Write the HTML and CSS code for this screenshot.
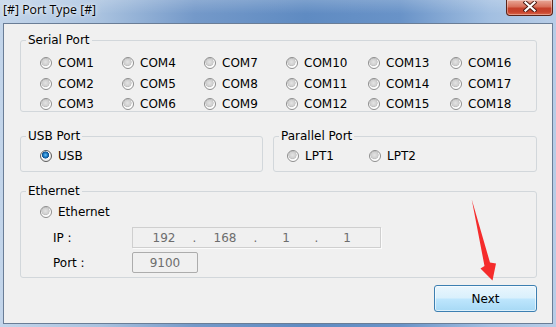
FILE: index.html
```html
<!DOCTYPE html>
<html>
<head>
<meta charset="utf-8">
<link rel="stylesheet" href="styles.css">
</head>
<body>
<div class="window">
  <div class="titlebar">
    <span class="title">[#] Port Type [#]</span>
    <span class="close"><svg width="14" height="11" viewBox="0 0 14 11"><path d="M2.5 1.5 L11.5 9.5 M11.5 1.5 L2.5 9.5" stroke="#4a1a12" stroke-width="4" stroke-linecap="square"/><path d="M2.5 1.5 L11.5 9.5 M11.5 1.5 L2.5 9.5" stroke="#fff" stroke-width="2.2" stroke-linecap="square"/></svg></span>
  </div>
  <div class="client">
    <fieldset class="group serial">
      <legend>Serial Port</legend>
      <div class="grid">
        <label class="opt"><span class="radio"></span>COM1</label>
        <label class="opt"><span class="radio"></span>COM4</label>
        <label class="opt"><span class="radio"></span>COM7</label>
        <label class="opt"><span class="radio"></span>COM10</label>
        <label class="opt"><span class="radio"></span>COM13</label>
        <label class="opt"><span class="radio"></span>COM16</label>
        <label class="opt"><span class="radio"></span>COM2</label>
        <label class="opt"><span class="radio"></span>COM5</label>
        <label class="opt"><span class="radio"></span>COM8</label>
        <label class="opt"><span class="radio"></span>COM11</label>
        <label class="opt"><span class="radio"></span>COM14</label>
        <label class="opt"><span class="radio"></span>COM17</label>
        <label class="opt"><span class="radio"></span>COM3</label>
        <label class="opt"><span class="radio"></span>COM6</label>
        <label class="opt"><span class="radio"></span>COM9</label>
        <label class="opt"><span class="radio"></span>COM12</label>
        <label class="opt"><span class="radio"></span>COM15</label>
        <label class="opt"><span class="radio"></span>COM18</label>
      </div>
    </fieldset>
    <div class="midrow">
      <fieldset class="group usb">
        <legend>USB Port</legend>
        <div class="grid one">
          <label class="opt"><span class="radio checked"></span>USB</label>
        </div>
      </fieldset>
      <fieldset class="group parallel">
        <legend>Parallel Port</legend>
        <div class="grid two">
          <label class="opt"><span class="radio"></span>LPT1</label>
          <label class="opt"><span class="radio"></span>LPT2</label>
        </div>
      </fieldset>
    </div>
    <fieldset class="group ethernet">
      <legend>Ethernet</legend>
      <label class="opt eth"><span class="radio"></span>Ethernet</label>
      <div class="fields">
        <span class="lbl">IP :</span>
        <div class="box ip">
          <span class="seg">192</span><span class="dot">.</span>
          <span class="seg">168</span><span class="dot">.</span>
          <span class="seg">1</span><span class="dot">.</span>
          <span class="seg">1</span>
        </div>
        <span class="lbl">Port :</span>
        <div class="box port">9100</div>
      </div>
    </fieldset>
    <div class="buttons">
      <button class="btn">Next</button>
    </div>
  </div>
  <svg class="arrow" width="556" height="327" viewBox="0 0 556 327">
    <polygon points="471.7,199.3 490,262.5 496,263.5 492.5,280.5 480.5,268.5 484.5,266" fill="#f52c2c"/>
  </svg>
</div>
</body>
</html>
```

FILE: styles.css
```css
html, body {
  margin: 0;
  padding: 0;
}
body {
  width: 556px;
  height: 327px;
  overflow: hidden;
  font-family: "DejaVu Sans", Verdana, sans-serif;
  font-size: 12px;
  color: #000;
}
.window {
  position: relative;
  width: 556px;
  height: 327px;
  display: flex;
  flex-direction: column;
  background: linear-gradient(to right, #c3d5ea 0%, #a9c2df 18%, #7499c9 35%, #5f8bc2 55%, #6993c8 72%, #a2bfe1 88%, #b8cde7 100%);
}
.titlebar {
  height: 23px;
  flex: none;
  display: flex;
  align-items: flex-start;
  justify-content: space-between;
  background: linear-gradient(to bottom, rgba(255,255,255,0.18), rgba(255,255,255,0) 60%);
}
.title {
  font-family: "Open Sans", "DejaVu Sans", sans-serif;
  font-size: 12.3px;
  line-height: 20px;
  padding-left: 3px;
  color: #000;
  text-shadow: 0 0 6px rgba(255,255,255,0.9), 0 0 3px rgba(255,255,255,0.8);
}
.close {
  width: 45px;
  height: 14px;
  margin-right: 3px;
  border: 1px solid #5a2418;
  border-top: none;
  border-radius: 0 0 4px 4px;
  background: linear-gradient(to bottom, #e9a898 0%, #d8705a 45%, #c5402a 55%, #c8442d 80%, #dc6a4c 100%);
  box-shadow: inset 0 0 0 1px rgba(255,255,255,0.35);
  display: flex;
  align-items: flex-start;
  justify-content: center;
  padding-top: 1px;
}
.client {
  flex: 1;
  margin: 0 3px 3px 3px;
  border: 1px solid #6a7d96;
  background: #f0f0f0;
  padding: 9px 15px 0 16px;
  display: flex;
  flex-direction: column;
}
.group {
  margin: 0;
  padding: 0;
  min-width: 0;
  border: 1px solid #d2d7db;
  border-radius: 3px;
}
.group legend {
  margin-left: 5px;
  padding: 0 2px;
  line-height: 14px;
  height: 14px;
}
.grid {
  display: grid;
  grid-template-columns: repeat(6, 82px);
  grid-auto-rows: 14px;
  row-gap: 6.5px;
  padding-left: 19px;
}
.serial .grid {
  padding-top: 9px;
}
.opt {
  display: flex;
  align-items: center;
  line-height: 14px;
  height: 14px;
  white-space: nowrap;
}
.radio {
  width: 10px;
  height: 10px;
  border-radius: 50%;
  border: 1px solid #8e8e8e;
  margin-right: 6px;
  flex: none;
  background: radial-gradient(circle at 45% 40%, #e4e4e4 0, #cfcfcf 3.2px, #bdbdbd 3.8px, #f4f4f4 4.3px, #ffffff 5px);
}
.radio.checked {
  border-color: #5d5d5d;
  background: radial-gradient(circle at 45% 40%, #6fc2f5 0, #1d7cc4 2px, #0f4f8e 3.3px, #ffffff 3.8px, #ececec 5px);
}
.midrow {
  display: flex;
  gap: 10px;
  margin-top: 17px;
}
.usb {
  width: 243px;
  box-sizing: border-box;
}
.parallel {
  flex: 1;
}
.usb .grid, .parallel .grid {
  padding-top: 6px;
  padding-bottom: 8px;
}
.parallel .grid {
  padding-left: 13px;
}
.ethernet {
  margin-top: 12px;
  padding: 7px 0 4px 0;
}
.eth {
  padding-left: 19px;
}
.fields {
  display: grid;
  grid-template-columns: 79px auto;
  grid-auto-rows: 21px;
  row-gap: 4px;
  margin-top: 8px;
  padding-left: 32px;
  align-items: center;
  justify-items: start;
}
.lbl {
  line-height: 14px;
}
.box {
  box-sizing: border-box;
  height: 21px;
  color: #6d6d6d;
  display: flex;
  align-items: center;
  background: #f0f0f0;
}
.ip {
  width: 249px;
  border: 1px solid #cfcfcf;
  box-shadow: 1px 1px 0 #fbfbfb;
  padding-left: 10px;
}
.seg {
  width: 42px;
  text-align: center;
}
.dot {
  width: 19px;
  text-align: center;
}
.port {
  width: 66px;
  border: 1px solid #acacac;
  border-radius: 2px;
  justify-content: center;
}
.buttons {
  display: flex;
  justify-content: flex-end;
  margin-top: 7px;
}
.btn {
  width: 103px;
  height: 27px;
  margin: 0;
  padding: 0;
  font-family: "DejaVu Sans", Verdana, sans-serif;
  font-size: 12px;
  color: #000;
  border: 1px solid #3c7fb1;
  border-radius: 3px;
  background: linear-gradient(to bottom, #eaf6fd 0%, #d9f0fc 48%, #bee6fd 52%, #a7d9f5 100%);
  box-shadow: inset 0 0 0 1px rgba(255,255,255,0.6);
}
.arrow {
  position: absolute;
  left: 0;
  top: 0;
  pointer-events: none;
}
```
